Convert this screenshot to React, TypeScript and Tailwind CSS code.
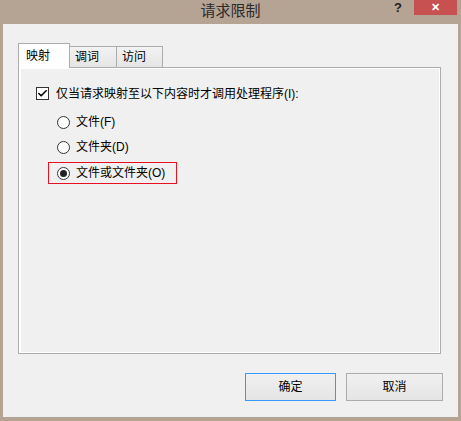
import { Check } from "lucide-react";

const font = "font-['Liberation_Sans','Noto_Sans_CJK_SC',sans-serif]";

const Radio = ({ checked }: { checked?: boolean }) => (
  <span className="flex h-[13px] w-[13px] shrink-0 items-center justify-center rounded-full border border-[#333] bg-white">
    {checked && <span className="h-[7px] w-[7px] rounded-full bg-[#222]" />}
  </span>
);

const App = () => {
  return (
    <div className={`flex h-[421px] w-[461px] flex-col bg-[#b5a393] ${font} text-[12px] text-black`}>
      {/* title bar */}
      <div className="grid h-[24px] shrink-0 grid-cols-[1fr_auto_1fr]">
        <div />
        <div className="pt-[2px] text-[15px] leading-[18px] text-[#2b2b2b]">请求限制</div>
        <div className="flex items-start justify-end">
          <span className="mr-[12px] mt-[1px] text-[13px] font-bold leading-[13px] text-[#222]">?</span>
          <button className="mr-[4px] flex h-[15px] w-[43px] items-center justify-center bg-[#c75050] text-[11px] font-bold leading-none text-white">
            ✕
          </button>
        </div>
      </div>

      {/* client */}
      <div className="mx-[3px] mb-[4px] flex flex-1 flex-col bg-[#f0f0f0] pl-[15px] pr-[15px] pt-[19px]">
        <div className="flex h-[24px] items-end">
          <div className="relative z-10 mb-[-1px] h-[25px] w-[52px] border border-b-0 border-[#acacac] bg-white pl-[7px] pt-[5px] leading-[14px]">
            映射
          </div>
          <div className="h-[21px] w-[47px] border border-b-0 border-l-0 border-[#acacac] bg-gradient-to-b from-[#f2f2f2] to-[#e5e5e5] pl-[5px] pt-[3px] leading-[14px]">
            调词
          </div>
          <div className="h-[21px] w-[46px] border border-b-0 border-l-0 border-[#acacac] bg-gradient-to-b from-[#f2f2f2] to-[#e5e5e5] pl-[5px] pt-[3px] leading-[14px]">
            访问
          </div>
        </div>

        <div className="h-[287px] w-[423px] border border-[#acacac]">
          <div className="h-full w-full border border-l-2 border-white pl-[15px] pt-[18px]">
            <label className="flex h-[13px] items-center gap-[7px]">
              <span className="flex h-[13px] w-[13px] shrink-0 items-center justify-center border border-[#333] bg-white">
                <Check size={11} strokeWidth={3.5} className="text-black" />
              </span>
              <span className="leading-[14px]">仅当请求映射至以下内容时才调用处理程序(I):</span>
            </label>

            <div className="ml-[12px] mt-[11px] flex h-[22px] w-fit items-center gap-[6px] border border-transparent pl-[8px] pr-[10px]">
              <Radio />
              <span className="leading-[14px]">文件(F)</span>
            </div>
            <div className="ml-[12px] mt-[3px] flex h-[22px] w-fit items-center gap-[6px] border border-transparent pl-[8px] pr-[10px]">
              <Radio />
              <span className="leading-[14px]">文件夹(D)</span>
            </div>
            <div className="ml-[12px] mt-[4px] flex h-[22px] w-[129px] items-center gap-[6px] border border-[#e81123] pl-[8px]">
              <Radio checked />
              <span className="leading-[14px]">文件或文件夹(O)</span>
            </div>
          </div>
        </div>

        <div className="mt-[19px] flex justify-end gap-[10px]">
          <button className="h-[28px] w-[91px] border border-[#3399ff] bg-gradient-to-b from-[#f0f0f0] to-[#e5e5e5] text-[12px]">
            确定
          </button>
          <button className="h-[28px] w-[97px] border border-[#acacac] bg-gradient-to-b from-[#f0f0f0] to-[#e5e5e5] text-[12px]">
            取消
          </button>
        </div>
      </div>
    </div>
  );
};

export default App;
